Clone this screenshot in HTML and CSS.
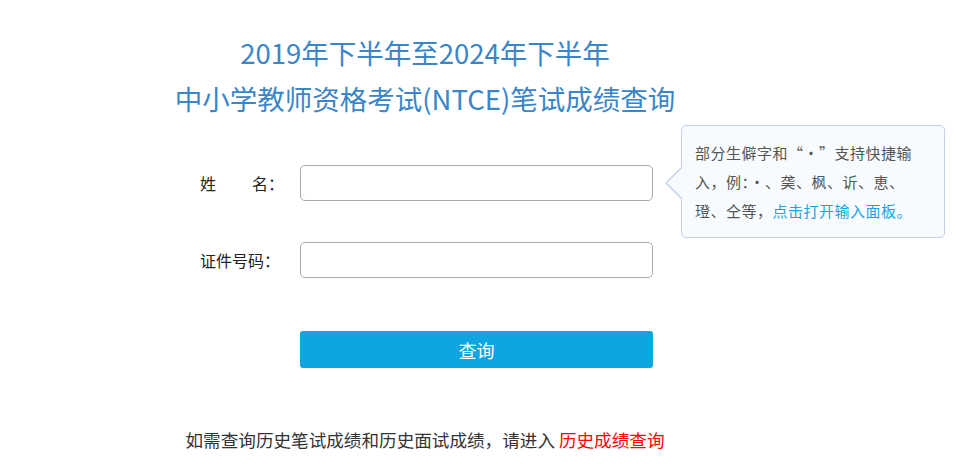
FILE: index.html
```html
<!DOCTYPE html>
<html lang="zh-CN">
<head>
<meta charset="utf-8">
<title>成绩查询</title>
<link rel="stylesheet" href="styles.css">
</head>
<body>
<div class="page">
  <h1 class="title">2019年下半年至2024年下半年<br>中小学教师资格考试(NTCE)笔试成绩查询</h1>
  <form class="form">
    <div class="row">
      <label class="label">姓<span class="sp"></span>名：</label>
      <input class="field" type="text">
      <div class="tip">部分生僻字和“·”支持快捷输入，例：·、䶮、枫、䜣、恵、璒、仝等，<a class="tip-link" href="#">点击打开输入面板。</a></div>
    </div>
    <div class="row">
      <label class="label">证件号码：</label>
      <input class="field" type="text">
    </div>
    <div class="row row-btn">
      <button class="btn" type="button">查询</button>
    </div>
  </form>
  <p class="note">如需查询历史笔试成绩和历史面试成绩，请进入 <a class="note-link" href="#">历史成绩查询</a></p>
</div>
</body>
</html>
```
FILE: styles.css
```css
html, body {
  margin: 0;
  padding: 0;
  background: #fff;
}
body {
  font-family: "Noto Sans CJK SC", "Noto Sans", sans-serif;
  color: #333;
}
.page {
  width: 500px;
  margin-left: 175px;
  padding-top: 29px;
}
.title {
  margin: 0 -40px;
  font-size: 27.5px;
  font-weight: normal;
  line-height: 46px;
  color: #3a86c8;
  text-align: center;
  white-space: nowrap;
}
.form {
  margin-top: 44px;
}
.row {
  position: relative;
  display: flex;
  align-items: center;
  height: 36px;
  margin-bottom: 41px;
}
.row-btn {
  margin-top: 53px;
  height: 37px;
}
.label {
  width: 80px;
  margin-left: 25px;
  margin-right: 20px;
  font-size: 16px;
  color: #222;
  white-space: nowrap;
}
.sp {
  display: inline-block;
  width: 36px;
}
.field {
  box-sizing: border-box;
  width: 353px;
  height: 36px;
  border: 1px solid #aaa;
  border-radius: 5px;
  background: #fff;
  margin: 0;
}
.btn {
  margin-left: 125px;
  width: 353px;
  height: 37px;
  border: none;
  border-radius: 3px;
  background: #0ea5e1;
  color: #fff;
  font-family: inherit;
  font-size: 18px;
  cursor: pointer;
}
.tip {
  position: absolute;
  left: 506px;
  top: -40px;
  box-sizing: border-box;
  width: 264px;
  height: 113px;
  padding: 12px 20px 0 13px;
  background: #f7fbfe;
  border: 1px solid #c3d0ea;
  border-radius: 5px;
  font-size: 15px;
  letter-spacing: 0.5px;
  line-height: 29px;
  color: #555;
}
.tip::before,
.tip::after {
  content: "";
  position: absolute;
  top: 40px;
  width: 0;
  height: 0;
  border-style: solid;
}
.tip::before {
  left: -17px;
  border-width: 17px 17px 17px 0;
  border-color: transparent #c3d0ea transparent transparent;
}
.tip::after {
  left: -15px;
  top: 41px;
  border-width: 16px 16px 16px 0;
  border-color: transparent #f7fbfe transparent transparent;
}
.tip-link {
  color: #1aa1e6;
  text-decoration: none;
}
.note {
  margin: 60px -20px 0;
  font-size: 17.6px;
  color: #333;
  text-align: center;
  line-height: 24px;
  white-space: nowrap;
}
.note-link {
  color: #f00;
  text-decoration: none;
}
```
